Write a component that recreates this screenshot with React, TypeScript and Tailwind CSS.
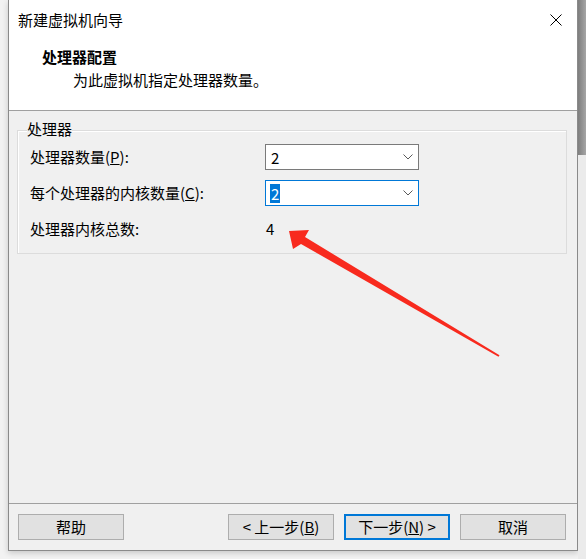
import React from "react";

function Chevron() {
  return (
    <svg width="10" height="6" viewBox="0 0 10 6" className="block">
      <polyline points="0.5,0.5 5,5 9.5,0.5" fill="none" stroke="#5a5a5a" strokeWidth="1" />
    </svg>
  );
}

function Combo({ focused }: { focused?: boolean }) {
  return (
    <div
      className={
        focused
          ? "h-[26px] border border-[#0078d7] bg-white flex items-center justify-between pl-[4px] pr-[5px]"
          : "h-[26px] border border-[#7a7a7a] bg-white flex items-center justify-between pl-[4px] pr-[5px]"
      }
    >
      {focused ? (
        <span className="bg-[#0078d7] text-white leading-[19px] px-[1px]">2</span>
      ) : (
        <span className="leading-[19px] px-[1px]">2</span>
      )}
      <Chevron />
    </div>
  );
}

function Btn({ children, def }: { children: React.ReactNode; def?: boolean }) {
  return (
    <div
      className={
        def
          ? "w-[106px] h-[26px] border-2 border-[#0078d7] bg-[#e1e1e1] flex items-center justify-center leading-[20px]"
          : "w-[106px] h-[26px] border border-[#adadad] bg-[#e1e1e1] flex items-center justify-center leading-[20px]"
      }
    >
      {children}
    </div>
  );
}

export default function App() {
  return (
    <div className="w-[586px] h-[559px] bg-[#f2f2f2] flex relative overflow-hidden font-['Microsoft_YaHei_UI','Noto_Sans_CJK_SC',sans-serif] text-[15px] text-black">
      <div className="w-[8px] shrink-0" />
      <div className="w-[570px] h-[551px] shrink-0 flex flex-col border-l border-r border-b border-[#8a8a8a] bg-[#f0f0f0] shadow-[0_2px_6px_rgba(0,0,0,0.18)]">
        {/* header */}
        <div className="h-[110px] bg-white flex flex-col">
          <div className="h-[40px] flex items-center justify-between pl-[9px] pr-[15px]">
            <span className="leading-[20px]">新建虚拟机向导</span>
            <svg width="12" height="12" viewBox="0 0 12 12" className="block">
              <line x1="0.5" y1="0.5" x2="11.5" y2="11.5" stroke="#000" strokeWidth="1" />
              <line x1="11.5" y1="0.5" x2="0.5" y2="11.5" stroke="#000" strokeWidth="1" />
            </svg>
          </div>
          <div className="mt-[7px] pl-[33px] leading-[20px] font-bold">处理器配置</div>
          <div className="mt-[3px] pl-[64px] leading-[20px]">为此虚拟机指定处理器数量。</div>
        </div>
        <div className="h-px bg-[#a0a0a0]" />
        {/* body */}
        <div className="flex-1 flex flex-col">
          <div className="mt-[19px] ml-[8px] w-[550px] relative border border-[#dcdcdc] shadow-[inset_1px_1px_0_#ffffff] pt-[13px] pb-[11px] pl-[12px]">
            <span className="absolute left-[9px] top-[-12px] bg-[#f0f0f0] leading-[20px]">处理器</span>
            <div className="grid grid-cols-[235px_154px] gap-y-[10px] items-center">
              <div className="leading-[26px]">
                处理器数量(<span className="underline">P</span>):
              </div>
              <Combo />
              <div className="leading-[26px]">
                每个处理器的内核数量(<span className="underline">C</span>):
              </div>
              <Combo focused />
              <div className="leading-[26px]">处理器内核总数:</div>
              <div className="leading-[26px] pl-[1px]">4</div>
            </div>
          </div>
        </div>
        <div className="h-px bg-[#a0a0a0]" />
        {/* footer */}
        <div className="flex items-center pt-[10px] pb-[10px] pl-[9px] pr-[11px]">
          <Btn>帮助</Btn>
          <div className="flex-1" />
          <div className="flex gap-[10px]">
            <Btn>
              &lt; 上一步(<span className="underline">B</span>)
            </Btn>
            <Btn def>
              下一步(<span className="underline">N</span>) &gt;
            </Btn>
            <Btn>取消</Btn>
          </div>
        </div>
      </div>
      <div className="flex-1 flex flex-col">
        <div className="h-[155px] bg-gradient-to-r from-[#7e7e7e] to-[#a6a6a6]" />
        <div className="flex-1 bg-[#ebebeb]" />
      </div>
      <svg className="absolute left-0 top-0 pointer-events-none" width="586" height="559" viewBox="0 0 586 559">
        <polygon
          points="289,231 309,230 305,237 499.5,355.3 498.5,356.7 301,244 293,249"
          fill="#f82a1e"
        />
      </svg>
    </div>
  );
}
